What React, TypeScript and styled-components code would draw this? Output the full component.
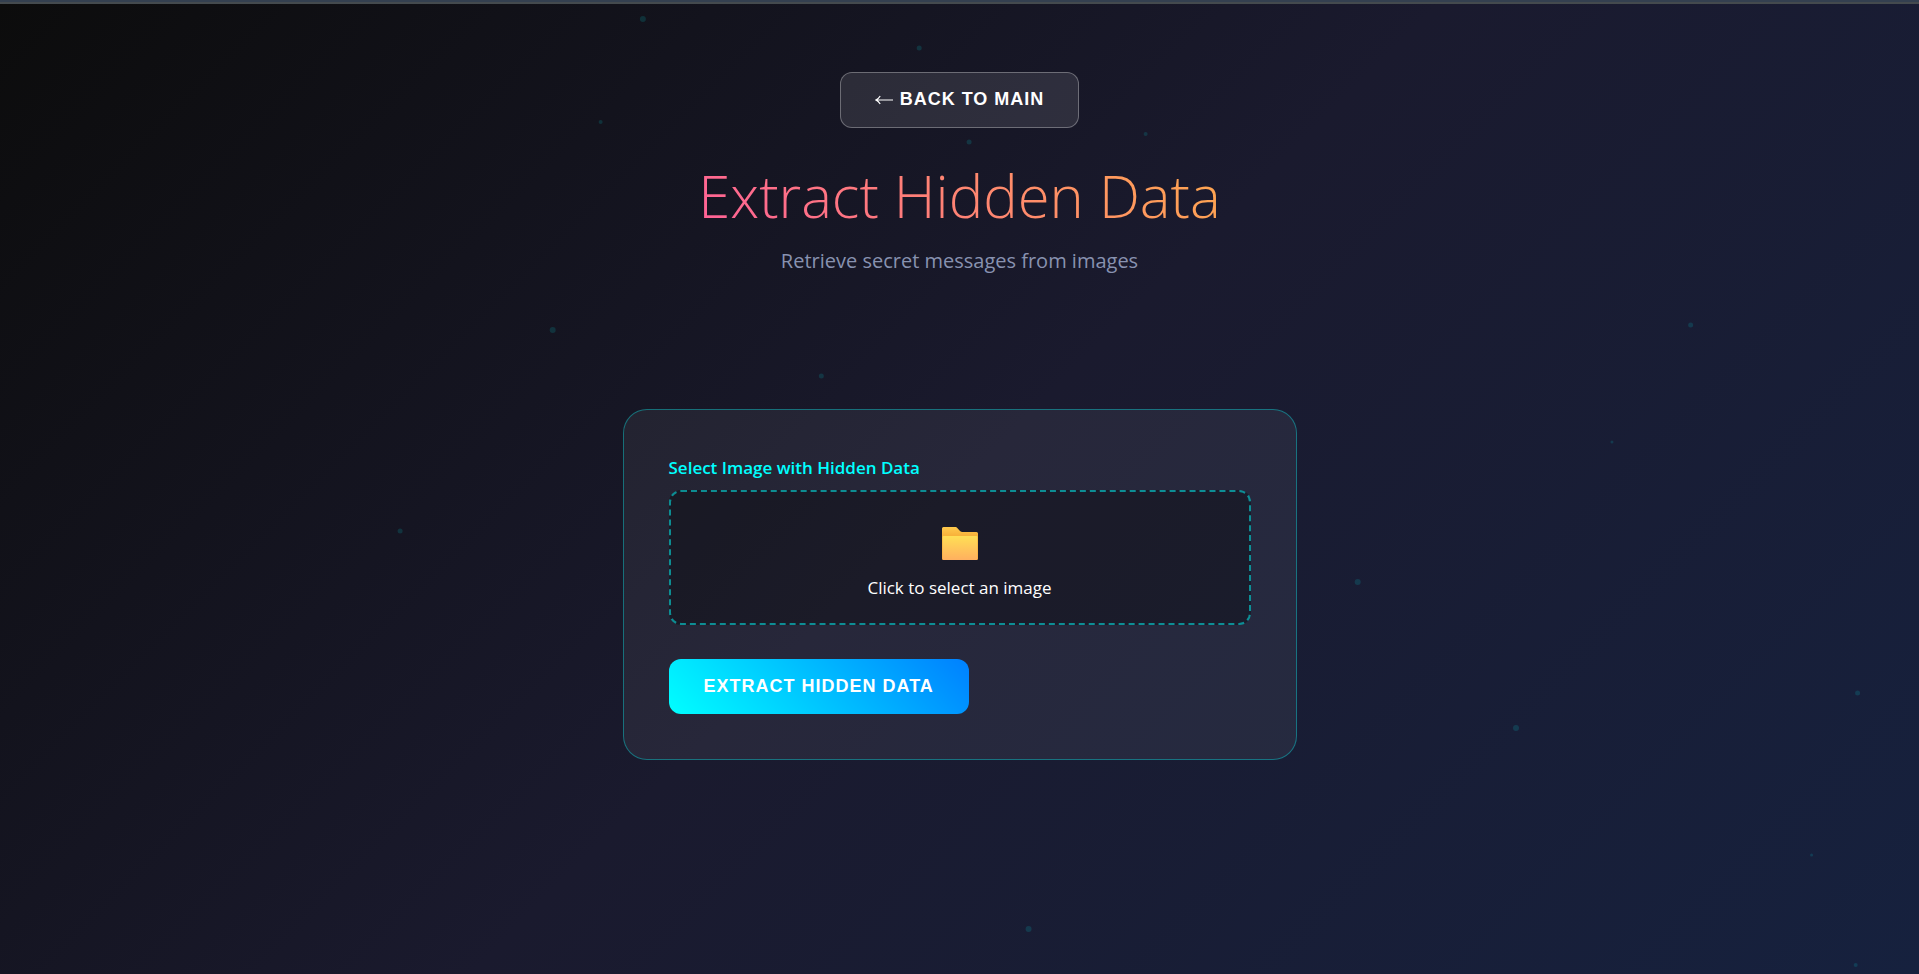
import React, { useState } from 'react';
import styled, { createGlobalStyle } from 'styled-components';

const GlobalStyle = createGlobalStyle`
  *, *::before, *::after { box-sizing: border-box; }
  body {
    margin: 0;
    background: #0c0c0c;
    color: #ffffff;
    font-family: 'Segoe UI', 'Open Sans', 'Noto Sans', sans-serif;
  }
`;

const Page = styled.div`
  position: relative;
  min-height: 100vh;
  background: linear-gradient(135deg, #0c0c0c 0%, #1a1a2e 50%, #16213e 100%);
  overflow: hidden;
`;

const TopEdge = styled.div`
  height: 4px;
  border-bottom: 2px solid #444a4e;
  background: #344050;
`;

const Particles = styled.svg`
  position: absolute;
  inset: 0;
  width: 100%;
  height: 100%;
  fill: rgba(0, 255, 255, 0.13);
  pointer-events: none;
`;

const Main = styled.main`
  position: relative;
  display: flex;
  flex-direction: column;
  align-items: center;
  padding: 68px 24px 48px;
`;

const Button = styled.button<{ $primary?: boolean }>`
  display: inline-flex;
  align-items: center;
  justify-content: center;
  gap: 7px;
  height: ${(p) => (p.$primary ? 55 : 56)}px;
  padding: 0 ${(p) => (p.$primary ? 35 : 34)}px 2px;
  border: ${(p) => (p.$primary ? 'none' : '1px solid rgba(255, 255, 255, 0.3)')};
  border-radius: 12px;
  background: ${(p) =>
    p.$primary ? 'linear-gradient(45deg, #00ffff, #0080ff)' : 'rgba(255, 255, 255, 0.1)'};
  color: #ffffff;
  font: bold 18px/20px 'Liberation Sans', Arial, sans-serif;
  letter-spacing: 1px;
  text-transform: uppercase;
  cursor: pointer;
`;

const Title = styled.h1`
  margin: 30px 0 0;
  background: linear-gradient(45deg, #ff6098, #ffa94d);
  background-clip: text;
  -webkit-background-clip: text;
  color: transparent;
  font-size: 58px;
  font-weight: 300;
  line-height: 76px;
`;

const Subtitle = styled.p`
  margin: 12px 0 0;
  color: #8892b0;
  font-size: 20px;
  line-height: 30px;
`;

const Card = styled.form`
  width: 100%;
  max-width: 674px;
  margin-top: 133px;
  padding: 45px;
  border: 1px solid rgba(0, 255, 255, 0.35);
  border-radius: 24px;
  background: rgba(255, 255, 255, 0.06);
`;

const FieldLabel = styled.label`
  display: block;
  margin-bottom: 10px;
  color: #00ffff;
  font-size: 17px;
  font-weight: 600;
  line-height: 25px;
`;

const DropZone = styled.label`
  position: relative;
  display: flex;
  flex-direction: column;
  align-items: center;
  gap: 16px;
  height: 135px;
  margin-bottom: 34px;
  padding-top: 35px;
  border: 2px dashed rgba(0, 255, 255, 0.5);
  border-radius: 12px;
  background: rgba(0, 0, 0, 0.3);
  font-size: 17px;
  line-height: 24px;
  cursor: pointer;
`;

const FileInput = styled.input`
  position: absolute;
  inset: 0;
  width: 100%;
  height: 100%;
  opacity: 0;
  cursor: pointer;
`;

const particles = [
  [33.5, 19, 3], [47.9, 48, 2.5], [31.3, 122, 2], [59.7, 134, 2], [50.5, 142, 2.5],
  [28.8, 330, 3], [42.8, 376, 2.5], [88.1, 325, 2.5], [84, 442, 1.5], [70.75, 582, 3],
  [96.8, 693, 2.5], [79, 728, 3], [94.4, 855, 1.5], [96.7, 965, 2], [20.85, 531, 2.5],
  [53.6, 929, 3],
];

const ArrowLeft = () => (
  <svg width="18" height="12" viewBox="0 0 18 12" fill="none" stroke="#fff" strokeWidth="1.2" aria-hidden="true">
    <path d="M18 7H1M5.2 3C4 5 2.600 6.300.8 7c1.800.7 3.200 2 4.400 4" />
  </svg>
);

const Folder = () => (
  <svg width="36" height="33" viewBox="0 0 36 33" aria-hidden="true">
    <defs>
      <linearGradient id="folderBack" x1="0" y1="0" x2="0" y2="1">
        <stop offset="0" stopColor="#ffca4c" />
        <stop offset="0.35" stopColor="#f5a935" />
      </linearGradient>
      <linearGradient id="folderFront" x1="0" y1="0" x2="0" y2="1">
        <stop offset="0" stopColor="#ffdf55" />
        <stop offset="1" stopColor="#ffb05f" />
      </linearGradient>
    </defs>
    <path d="M1.500 0H13.500Q14.500 0 15.500 1.200L18 4Q19 5 20.500 5H34.500Q36 5 36 6.500V31.500Q36 33 34.500 33H1.500Q0 33 0 31.500V1.500Q0 0 1.500 0Z" fill="url(#folderBack)" />
    <path d="M.5 10Q.5 9 1.500 9H34.500Q35.500 9 35.500 10V31.500Q35.500 33 34 33H2Q.5 33 .5 31.500Z" fill="url(#folderFront)" />
  </svg>
);

export default function App() {
  const [fileName, setFileName] = useState('');

  return (
    <Page>
      <GlobalStyle />
      <TopEdge />
      <Particles aria-hidden="true">
        {particles.map(([x, y, r]) => (
          <circle key={`${x}-${y}`} cx={`${x}%`} cy={y} r={r} />
        ))}
      </Particles>
      <Main>
        <Button type="button">
          <ArrowLeft />
          Back to Main
        </Button>
        <Title>Extract Hidden Data</Title>
        <Subtitle>Retrieve secret messages from images</Subtitle>
        <Card onSubmit={(e) => e.preventDefault()}>
          <FieldLabel htmlFor="image">Select Image with Hidden Data</FieldLabel>
          <DropZone>
            <Folder />
            <span>{fileName || 'Click to select an image'}</span>
            <FileInput
              id="image"
              type="file"
              accept="image/*"
              onChange={(e) => setFileName(e.target.files?.[0]?.name ?? '')}
            />
          </DropZone>
          <Button type="submit" $primary>
            Extract Hidden Data
          </Button>
        </Card>
      </Main>
    </Page>
  );
}
